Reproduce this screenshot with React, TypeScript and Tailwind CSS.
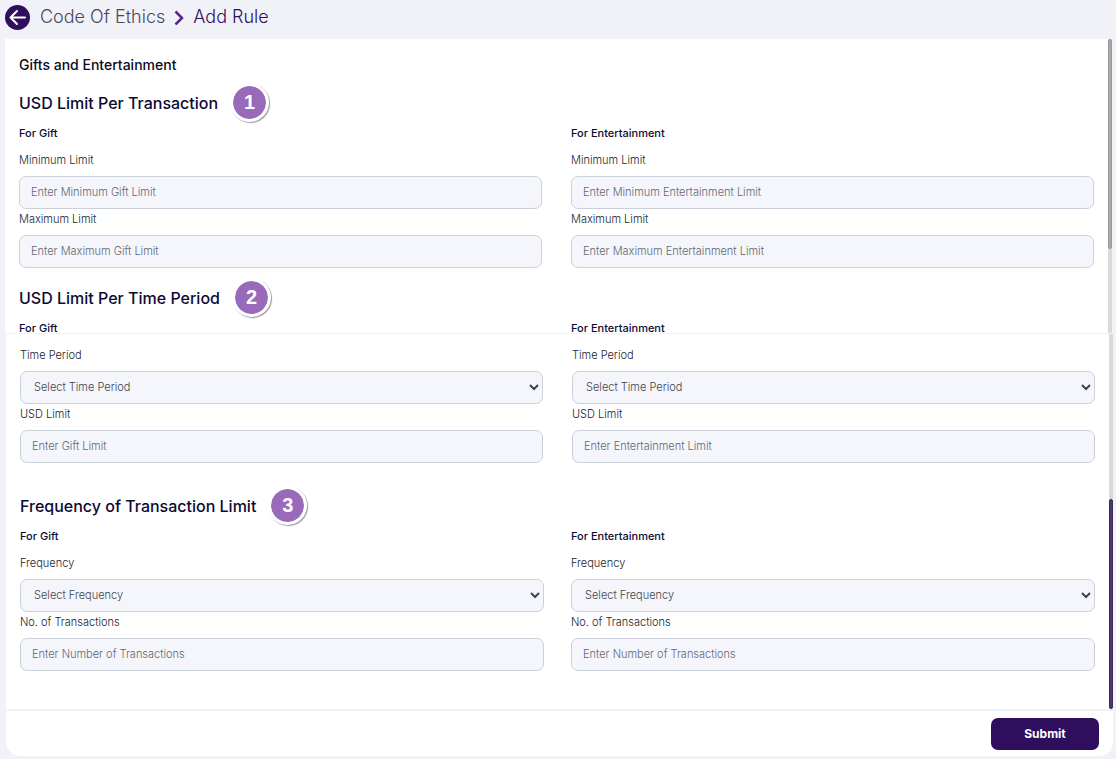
import type { ReactNode } from 'react';

type FieldProps = {
    id: string;
    label: string;
    placeholder: string;
    select?: boolean;
};

function Field({ id, label, placeholder, select }: FieldProps) {
    const box = 'block w-full h-[33px] rounded-[7px] border border-[#cbd1db] bg-[#f5f6fc] pb-px text-[11px] font-light outline-none focus:border-[#2f0f5d]';

    return (
        <div>
            <label htmlFor={id} className="block leading-5 mb-1.5 text-[11px] font-light text-[#1b1b2b]">{label}</label>
            {select ? (
                <select id={id} className={`${box} px-[9px] text-[#3d444d]`}>
                    <option>{placeholder}</option>
                </select>
            ) : (
                <input id={id} type="text" placeholder={placeholder} className={`${box} px-[11px] text-[#212529] placeholder:text-[#5f6872]`} />
            )}
        </div>
    );
}

function SectionTitle({ step, children }: { step: number; children: ReactNode }) {
    return (
        <div className="flex items-center gap-3 h-10">
            <h2 className="text-base font-medium text-[#0c0a33]">{children}</h2>
            <span className="flex items-center justify-center size-[39px] mb-0.5 rounded-full border-3 border-white bg-[#9a6aba] bg-clip-padding shadow-[1px_1px_1px_#9a9a9a] font-['Liberation_Sans',sans-serif] text-xl font-bold text-white">
                {step}
            </span>
        </div>
    );
}

function GroupLabels({ className }: { className: string }) {
    return (
        <div className={`grid grid-cols-2 leading-5 text-[11px] font-medium text-[#0c0a33] ${className}`}>
            <h3>For Gift</h3>
            <h3>For Entertainment</h3>
        </div>
    );
}

function ScrollBar({ thumb, atEnd }: { thumb: string; atEnd?: boolean }) {
    return (
        <div className={`flex flex-col w-1 shrink-0 bg-[#d9d9d9] ${atEnd ? 'justify-end' : ''}`}>
            <div className={`h-[210px] rounded-sm ${thumb}`} />
        </div>
    );
}

export default function App() {
    return (
        <div className="min-h-screen bg-[#f1f2f8] pb-[3px] font-['Inter',sans-serif]">
            <header className="flex items-center h-[39px] pl-[5px] pb-1">
                <button type="button" aria-label="Back" className="size-[25px] rounded-full bg-[#2f0f5d]">
                    <svg viewBox="0 0 25 25" fill="none" stroke="white" strokeWidth="2" strokeLinecap="round" strokeLinejoin="round">
                        <path d="M20 12.5H5.5M12 6l-6.500 6.500L12 19" />
                    </svg>
                </button>
                <nav className="flex items-center ml-2.5 pb-0.5 text-lg font-light">
                    <a href="#" className="text-[#4a4560]">Code Of Ethics</a>
                    <svg className="mx-[9px] w-2.5 h-4" viewBox="0 0 10 16" fill="none" stroke="#54268c" strokeWidth="2.500">
                        <path d="M1.500 2.500L8 9l-6.500 6.500" />
                    </svg>
                    <span className="text-[#2f0f5d]">Add Rule</span>
                </nav>
            </header>

            <section className="flex ml-[5px] mr-1 bg-white">
                <div className="flex-1 px-3.5 pt-4">
                    <h1 className="leading-5 mb-2 text-sm font-medium text-[#0b0b22]">Gifts and Entertainment</h1>
                    <SectionTitle step={1}>USD Limit Per Transaction</SectionTitle>
                    <GroupLabels className="gap-x-[29px] mb-[7px]" />
                    <div className="grid grid-cols-2 gap-x-[29px] mb-2.5">
                        <Field id="gift-min" label="Minimum Limit" placeholder="Enter Minimum Gift Limit" />
                        <Field id="ent-min" label="Minimum Limit" placeholder="Enter Minimum Entertainment Limit" />
                        <Field id="gift-max" label="Maximum Limit" placeholder="Enter Maximum Gift Limit" />
                        <Field id="ent-max" label="Maximum Limit" placeholder="Enter Maximum Entertainment Limit" />
                    </div>
                    <SectionTitle step={2}>USD Limit Per Time Period</SectionTitle>
                    <GroupLabels className="gap-x-[29px] h-[15px]" />
                </div>
                <ScrollBar thumb="bg-[#a9a9a9] border border-[#999999]" />
            </section>

            <section className="flex ml-1.5 mr-[3px] border-t border-[#f1f2f6] bg-white">
                <div className="flex-1 px-3.5 pt-[11px] pb-[38px]">
                    <div className="grid grid-cols-2 gap-x-[29px] mb-[23px]">
                        <Field id="gift-period" label="Time Period" placeholder="Select Time Period" select />
                        <Field id="ent-period" label="Time Period" placeholder="Select Time Period" select />
                        <Field id="gift-usd" label="USD Limit" placeholder="Enter Gift Limit" />
                        <Field id="ent-usd" label="USD Limit" placeholder="Enter Entertainment Limit" />
                    </div>
                    <SectionTitle step={3}>Frequency of Transaction Limit</SectionTitle>
                    <GroupLabels className="gap-x-[27px] mb-[7px]" />
                    <div className="grid grid-cols-2 gap-x-[27px]">
                        <Field id="gift-freq" label="Frequency" placeholder="Select Frequency" select />
                        <Field id="ent-freq" label="Frequency" placeholder="Select Frequency" select />
                        <Field id="gift-count" label="No. of Transactions" placeholder="Enter Number of Transactions" />
                        <Field id="ent-count" label="No. of Transactions" placeholder="Enter Number of Transactions" />
                    </div>
                </div>
                <ScrollBar thumb="bg-[#4b3a69] border border-[#3f2b60]" atEnd />
            </section>

            <footer className="flex justify-end ml-1.5 mr-[3px] px-3.5 pt-[7px] pb-1.5 border-t-2 border-[#f1f2f8] bg-white rounded-b-[14px]">
                <button type="submit" className="w-[108px] h-8 rounded-[7px] bg-[#2f0f5d] text-xs font-bold text-white">Submit</button>
            </footer>
        </div>
    );
}
